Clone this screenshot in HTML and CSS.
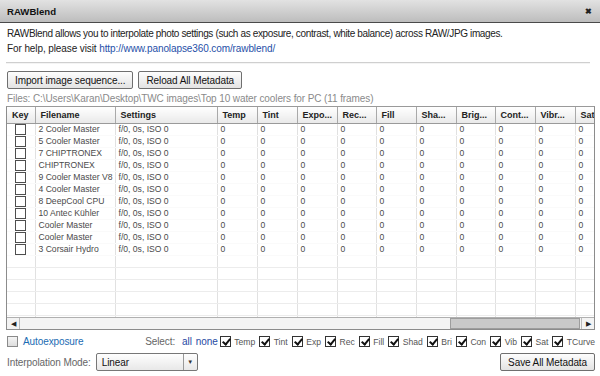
FILE: index.html
```html
<!DOCTYPE html>
<html>
<head>
<meta charset="utf-8">
<link rel="stylesheet" href="styles.css">
</head>
<body>
<div class="window">
  <div class="titlebar">
    <span class="title">RAWBlend</span>
    <span class="close">&#x2716;</span>
  </div>
  <div class="content">
    <p class="desc"><span class="line1">RAWBlend allows you to interpolate photo settings (such as exposure, contrast, white balance) across RAW/JPG images.</span><br>For help, please visit <a class="link" href="#">http://www.panolapse360.com/rawblend/</a></p>
    <div class="sep"></div>
    <div class="buttons">
      <button class="btn">Import image sequence...</button>
      <button class="btn">Reload All Metadata</button>
    </div>
    <div class="files">Files: C:\Users\Karan\Desktop\TWC images\Top 10 water coolers for PC (11 frames)</div>
    <div class="gridbox">
      <div class="gridview">
        <table class="grid">
          <colgroup>
            <col class="c-key"><col class="c-file"><col class="c-set">
            <col class="c-n"><col class="c-n"><col class="c-n"><col class="c-n9"><col class="c-n"><col class="c-n"><col class="c-n9"><col class="c-n"><col class="c-n"><col class="c-n">
          </colgroup>
          <thead>
            <tr><th>Key</th><th>Filename</th><th>Settings</th><th>Temp</th><th>Tint</th><th>Expo...</th><th>Rec...</th><th>Fill</th><th>Sha...</th><th>Brig...</th><th>Cont...</th><th>Vibr...</th><th>Saturation</th></tr>
          </thead>
          <tbody id="rows"></tbody>
        </table>
      </div>
      <div class="hscroll">
        <div class="arrow">&#9664;</div>
        <div class="track"><div class="thumb"></div></div>
        <div class="arrow">&#9654;</div>
      </div>
    </div>
    <div class="optrow">
      <label class="auto"><span class="cb plain"></span><span class="blue">Autoexposure</span></label>
      <div class="select-group">
        <span class="gray sel-label">Select:</span>
        <a class="sel" href="#">all</a>
        <a class="sel sel-none" href="#">none</a>
        <span class="chk"><span class="cb on"></span>Temp</span>
        <span class="chk"><span class="cb on"></span>Tint</span>
        <span class="chk"><span class="cb on"></span>Exp</span>
        <span class="chk"><span class="cb on"></span>Rec</span>
        <span class="chk"><span class="cb on"></span>Fill</span>
        <span class="chk"><span class="cb on"></span>Shad</span>
        <span class="chk"><span class="cb on"></span>Bri</span>
        <span class="chk"><span class="cb on"></span>Con</span>
        <span class="chk"><span class="cb on"></span>Vib</span>
        <span class="chk"><span class="cb on"></span>Sat</span>
        <span class="chk"><span class="cb on"></span>TCurve</span>
      </div>
    </div>
    <div class="bottomrow">
      <div class="interp">
        <span class="gray">Interpolation Mode:</span>
        <div class="select"><span class="selval">Linear</span><span class="selarrow">&#9660;</span></div>
      </div>
      <button class="btn">Save All Metadata</button>
    </div>
  </div>
</div>
<script>
var names = ["2 Cooler Master","5 Cooler Master","7 CHIPTRONEX","CHIPTRONEX","9 Cooler Master V8","4 Cooler Master","8 DeepCool CPU","10 Antec K\u00fchler","Cooler Master","Cooler Master","3 Corsair Hydro"];
var tb = document.getElementById("rows");
var html = "";
names.forEach(function(n){
  html += '<tr><td class="keycell"><span class="keybox"></span></td><td>' + n + '</td><td>f/0, 0s, ISO 0</td>';
  for (var i = 0; i < 10; i++) html += '<td>0</td>';
  html += '</tr>';
});
for (var r = 0; r < 6; r++) {
  html += '<tr class="empty">';
  for (var j = 0; j < 13; j++) html += '<td></td>';
  html += '</tr>';
}
tb.innerHTML = html;
</script>
</body>
</html>
```

FILE: styles.css
```css
* { box-sizing: border-box; }
html, body { margin: 0; padding: 0; background: #fff; }
body {
  font-family: "Liberation Sans", Arial, sans-serif;
  font-size: 10px;
  letter-spacing: -0.1px;
  color: #222;
  width: 600px;
  height: 376px;
  overflow: hidden;
}
.titlebar {
  height: 23px;
  display: flex;
  align-items: center;
  justify-content: space-between;
  padding: 0 8px 0 7px;
  background: linear-gradient(#e2e2e2, #bdbdbd);
  border-bottom: 1px solid #4a4a4a;
}
.title { font-weight: bold; color: #111; font-size: 9.6px; letter-spacing: 0; }
.close { font-size: 8px; color: #222; font-weight: bold; }
.content { padding: 0 6px 0 6px; }
.desc {
  margin: 3px 0 0 1px;
  line-height: 15px;
  color: #222;
}
.line1 { letter-spacing: -0.36px; }
.link { color: #1f4fa8; text-decoration: none; }
.sep {
  margin: 6px 4px 0 0;
  height: 2px;
  border-top: 1px solid #cfcfcf;
  border-bottom: 1px solid #f4f4f4;
}
.buttons { display: flex; gap: 5px; margin-top: 7px; padding-left: 1px; }
.btn {
  font-family: "Liberation Sans", Arial, sans-serif;
  font-size: 10px;
  letter-spacing: -0.1px;
  color: #111;
  height: 18px;
  padding: 0 7px;
  border: 1px solid #6f6f6f;
  border-radius: 2px;
  background: linear-gradient(#fdfdfd, #e3e3e3);
  line-height: 15px;
}
.files {
  color: #8a8a8a;
  line-height: 14px;
  margin-top: 3px;
  padding-left: 1px;
}
.gridbox {
  width: 589px;
  border: 1px solid #8c8c8c;
  border-top-color: #9a9a9a;
}
.gridview {
  height: 210px;
  overflow: hidden;
}
.grid {
  border-collapse: collapse;
  table-layout: fixed;
  width: 608px;
}
.c-key { width: 28px; }
.c-file { width: 80px; }
.c-set { width: 102px; }
.c-n { width: 40px; }
.c-n9 { width: 39px; }
.grid th {
  height: 16px;
  padding: 0 0 0 5px;
  text-align: left;
  font-weight: bold;
  font-size: 9px;
  letter-spacing: 0;
  color: #222;
  background: linear-gradient(#ffffff, #e9e9e9);
  border-right: 1px solid #a9a9a9;
  border-bottom: 1px solid #9a9a9a;
  white-space: nowrap;
  overflow: hidden;
  line-height: 14px;
}
.grid td {
  height: 12px;
  padding: 0 0 0 3px;
  line-height: 11px;
  font-size: 8.6px;
  letter-spacing: 0;
  color: #4a4a4a;
  border-right: 1px solid #e1e1e1;
  border-bottom: 1px solid #ececec;
  white-space: nowrap;
  overflow: hidden;
}
.grid tbody tr:not(.empty) td { border-bottom-color: #fafafa; }
.grid td.keycell { padding: 0; text-align: center; }
.keybox {
  display: inline-block;
  width: 11px;
  height: 11px;
  border: 1px solid #4e4e4e;
  background: #fff;
  vertical-align: top;
}
.hscroll {
  height: 12px;
  display: flex;
  border-top: 1px solid #b0b0b0;
  background: #f3f3f3;
}
.arrow {
  width: 13px;
  font-size: 7px;
  line-height: 11px;
  text-align: center;
  color: #222;
  border-right: 1px solid #bbb;
}
.arrow:last-child { border-right: 0; border-left: 1px solid #bbb; }
.track { flex: 1; position: relative; background: #f4f4f4; }
.thumb {
  position: absolute;
  left: 430px;
  top: 0;
  bottom: 0;
  width: 130px;
  background: #c9c9c9;
  border: 1px solid #9d9d9d;
}
.optrow {
  margin-top: 5px;
  display: flex;
  align-items: center;
  justify-content: space-between;
  height: 13px;
  width: 589px;
}
.auto { display: flex; align-items: center; gap: 5px; padding-left: 1px; }
.blue { color: #1b6cb3; }
.gray { color: #666; }
.cb {
  display: inline-block;
  width: 11px;
  height: 11px;
  border: 1px solid #333;
  background: #fff;
  position: relative;
  flex: none;
}
.cb.plain { border-color: #8a8a8a; background: linear-gradient(#f4f4f4, #dedede); }
.cb.on::after {
  content: "";
  position: absolute;
  left: 3px;
  top: 0px;
  width: 3px;
  height: 6px;
  border-right: 2px solid #111;
  border-bottom: 2px solid #111;
  transform: rotate(40deg);
}
.select-group { display: flex; align-items: center; }
.sel-label { margin-right: 7px; }
.sel { color: #2749a3; text-decoration: none; margin-right: 4px; }
.sel-none { margin-right: 2px; }
.chk {
  display: flex;
  align-items: center;
  gap: 3.5px;
  font-size: 8.6px;
  letter-spacing: 0;
  color: #555;
  margin-right: 4px;
}
.chk:last-child { margin-right: 0; }
.bottomrow {
  margin-top: 5px;
  display: flex;
  align-items: center;
  justify-content: space-between;
  width: 589px;
}
.interp { display: flex; align-items: center; gap: 5px; padding-left: 1px; }
.select {
  width: 102px;
  height: 18px;
  border: 1px solid #777;
  border-radius: 2px;
  background: linear-gradient(#fefefe, #e8e8e8);
  display: flex;
  align-items: center;
}
.selval { flex: 1; padding-left: 5px; color: #111; }
.selarrow {
  width: 14px;
  height: 100%;
  border-left: 1px solid #999;
  font-size: 6px;
  line-height: 16px;
  text-align: center;
  color: #333;
}
```
